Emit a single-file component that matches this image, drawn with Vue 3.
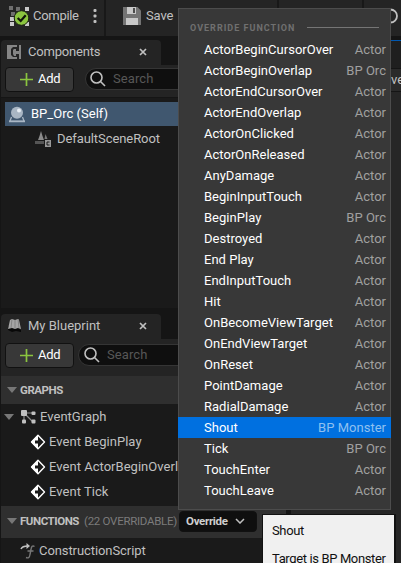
<script setup>
const functions = [
  ['ActorBeginCursorOver', 'Actor'],
  ['ActorBeginOverlap', 'BP Orc'],
  ['ActorEndCursorOver', 'Actor'],
  ['ActorEndOverlap', 'Actor'],
  ['ActorOnClicked', 'Actor'],
  ['ActorOnReleased', 'Actor'],
  ['AnyDamage', 'Actor'],
  ['BeginInputTouch', 'Actor'],
  ['BeginPlay', 'BP Orc'],
  ['Destroyed', 'Actor'],
  ['End Play', 'Actor'],
  ['EndInputTouch', 'Actor'],
  ['Hit', 'Actor'],
  ['OnBecomeViewTarget', 'Actor'],
  ['OnEndViewTarget', 'Actor'],
  ['OnReset', 'Actor'],
  ['PointDamage', 'Actor'],
  ['RadialDamage', 'Actor'],
  ['Shout', 'BP Monster'],
  ['Tick', 'BP Orc'],
  ['TouchEnter', 'Actor'],
  ['TouchLeave', 'Actor'],
]
const selected = 'Shout'
const events = ['Event BeginPlay', 'Event ActorBeginOverlap', 'Event Tick']
</script>

<template>
  <div class="editor">
    <header class="toolbar">
      <div class="group compile">
        <svg class="compile-icon" width="22" height="22" viewBox="0 0 22 22">
          <path fill="#6f6f6f" d="M1 1h4v4H1zM8 2h4v4H8zM3 7h4v4H3z" />
          <path fill="#c8c8c8" d="M17 2h4v4h-4zM2 12h4v4H2zM2 17h4v4H2zM8 8h4v4H8zM17 17h4v4h-4z" />
          <circle cx="13.500" cy="13" r="7.300" fill="#8bc53f" stroke="#1c2414" />
          <path d="M9.700 13l3 3 5-5.800" fill="none" stroke="#10150a" stroke-width="2.200" />
        </svg>
        <span>Compile</span>
        <svg class="dots" width="4" height="16" viewBox="0 0 4 16" fill="#c0c0c0">
          <rect x=".5" y="1" width="3" height="3" rx="1" />
          <rect x=".5" y="6.500" width="3" height="3" rx="1" />
          <rect x=".5" y="12" width="3" height="3" rx="1" />
        </svg>
      </div>
      <div class="group save">
        <svg width="18" height="18" viewBox="0 0 18 18">
          <path fill="#747474" d="M0 0h14.500L18 3.500V18H0z" />
          <path fill="#c8c8c8" d="M4 0h9v7H4zM3 11h12v7H3z" />
          <path fill="#4b4b4b" d="M10 1h2v5h-2z" />
        </svg>
        <span>Save</span>
      </div>
      <div class="group mid"></div>
      <div class="group find">
        <svg width="20" height="20" viewBox="0 0 20 20" fill="none" stroke="#c0c0c0" stroke-width="1.800">
          <circle cx="9.500" cy="8" r="6.500" />
          <path d="M5.500 12.500L1 17.500M8.500 5v6" />
        </svg>
      </div>
    </header>

    <div class="workspace">
      <aside class="sidebar">
        <section class="panel components">
          <div class="tab">
            <svg width="14" height="14" viewBox="0 0 14 14">
              <path fill="#858585" d="M0 0h10v2H6L4 4v6l2 2h4v2H0zM12 0h2v14h-2v-5H9v2H7L6 9V5l1-1h2v2h3z" />
            </svg>
            <span>Components</span>
            <svg class="close" width="8" height="8" viewBox="0 0 8 8"><path d="M1 1l6 6M7 1L1 7" stroke="#c0c0c0" stroke-width="1.700" /></svg>
          </div>
          <div class="controls">
            <button class="add">
              <svg width="13" height="13" viewBox="0 0 13 13"><path d="M6.500 0v13M0 6.500h13" stroke="#8bc53f" stroke-width="1.700" /></svg>Add
            </button>
            <div class="search">
              <svg width="16" height="16" viewBox="0 0 16 16" fill="none" stroke="#c0c0c0" stroke-width="1.600"><circle cx="6.500" cy="6.500" r="5.500" /><path d="M10.500 10.500l4.500 4.500" /></svg>
              <span>Search</span>
            </div>
          </div>
          <div class="tree">
            <div class="row self">
              <svg width="16" height="17" viewBox="0 0 16 17">
                <path d="M2.500 11L.8 15.500h14.400L13.500 11" fill="none" stroke="#a9b6c4" stroke-width="1.300" />
                <path d="M0 14.500h16V16H0z" fill="#a9b6c4" />
                <circle cx="8" cy="6.700" r="6" fill="#a9b6c4" />
                <circle cx="10" cy="4.500" r="2" fill="#e8eef5" />
              </svg>
              <span>BP_Orc (Self)</span>
            </div>
            <div class="row root">
              <svg width="17" height="16" viewBox="0 0 17 16">
                <path d="M6 0l1.500 5L9 9H3l1.500-4z" fill="#8a8a8a" />
                <path d="M10.500 3l2 5h-3z" fill="#777" />
                <path d="M0 10h9v3H0z" fill="#555" />
                <path d="M10 9h6v7h-6z" fill="#999" />
                <path d="M14.500 11H12v3h2.500" fill="none" stroke="#1a1a1a" stroke-width="1" />
              </svg>
              <span>DefaultSceneRoot</span>
            </div>
          </div>
        </section>

        <section class="panel blueprint">
          <div class="tab">
            <svg width="15" height="15" viewBox="0 0 15 15">
              <path d="M1 8l4 2 4-1 5 3v2l-5-1-4 1-4-2z" fill="#080808" />
              <path d="M3 2l2-1 3 1 3-1 1 1 2 9-3-1-3 1-3-1-4 1z" fill="#a5a5a5" />
              <path d="M5 1L4 10M8 2v9M11 1l1 9" stroke="#828282" />
            </svg>
            <span>My Blueprint</span>
            <svg class="close" width="8" height="8" viewBox="0 0 8 8"><path d="M1 1l6 6M7 1L1 7" stroke="#c0c0c0" stroke-width="1.700" /></svg>
          </div>
          <div class="controls">
            <button class="add">
              <svg width="13" height="13" viewBox="0 0 13 13"><path d="M6.500 0v13M0 6.500h13" stroke="#8bc53f" stroke-width="1.700" /></svg>Add
            </button>
            <div class="search">
              <svg width="16" height="16" viewBox="0 0 16 16" fill="none" stroke="#c0c0c0" stroke-width="1.600"><circle cx="6.500" cy="6.500" r="5.500" /><path d="M10.500 10.500l4.500 4.500" /></svg>
              <span>Search</span>
            </div>
          </div>
          <div class="section graphs"><i class="arrow"></i><b>GRAPHS</b></div>
          <div class="graph-tree">
            <div class="row graph">
              <i class="arrow"></i>
              <svg width="15" height="14" viewBox="0 0 15 14">
                <path d="M3 3h9M3 3v9M4 4l8 8" stroke="#8a8a8a" stroke-width="1.200" />
                <rect width="6" height="6" rx="1" fill="#c0c0c0" />
                <rect x="10.500" y="1.500" width="4" height="3.500" rx="1" fill="#c0c0c0" />
                <rect x="1" y="9.500" width="4" height="4" rx="1" fill="#c0c0c0" />
                <rect x="10.500" y="9.500" width="4" height="4" rx="1" fill="#c0c0c0" />
              </svg>
              <span>EventGraph</span>
            </div>
            <div v-for="event in events" :key="event" class="row event">
              <svg width="16" height="16" viewBox="0 0 16 16">
                <path d="M8 1.200L14.500 8 8 14.800 1.500 8z" fill="none" stroke="#fff" stroke-width="1.400" stroke-linejoin="round" />
                <path d="M8 1v14L1 8z" fill="#fff" />
                <path d="M5 6.500h3V4l4 4-4 4V9.500H5z" fill="#1a1a1a" />
              </svg>
              <span>{{ event }}</span>
            </div>
          </div>
          <div class="section functions">
            <i class="arrow"></i><b>FUNCTIONS</b><span class="count">(22 OVERRIDABLE)</span>
            <button class="override">Override
              <svg width="10" height="6" viewBox="0 0 10 6"><path d="M1 1l4 4 4-4" fill="none" stroke="#c0c0c0" stroke-width="1.500" /></svg>
            </button>
          </div>
          <div class="row script">
            <svg width="16" height="16" viewBox="0 0 16 16" fill="none">
              <path d="M1 6C2 3.500 4 3 8 3" stroke="#c0c0c0" stroke-width="1.500" />
              <path d="M6.500 0L10 3 6.500 6z" fill="#c0c0c0" />
              <path d="M14.500 3.500c-2-1.500-3 0-3.500 3l-1 5c-.5 3-1.500 4-4 3M7.500 8h6" stroke="#777" stroke-width="1.400" />
            </svg>
            <span>ConstructionScript</span>
          </div>
        </section>
      </aside>
      <main class="graph-view">
        <div class="graph-tabs"></div>
        <div class="breadcrumb"><span>ve</span></div>
      </main>
    </div>

    <div class="menu">
      <div class="menu-title"><span>OVERRIDE FUNCTION</span><i></i></div>
      <div v-for="[name, owner] in functions" :key="name" class="item" :class="{ active: name === selected }">
        <span>{{ name }}</span><em>{{ owner }}</em>
      </div>
    </div>
    <div class="tooltip"><p>Shout</p><p>Target is BP Monster</p></div>
  </div>
</template>

<style>
body { background: #151515; overflow: hidden; }
</style>
<style scoped>
* { box-sizing: border-box; }
.editor { position: relative; width: 401px; height: 563px; overflow: hidden; display: flex; flex-direction: column; background: #151515; color: #c0c0c0; font: 13px/16px Roboto, sans-serif; letter-spacing: .02px; white-space: nowrap; }
svg { display: block; flex: none; }
i, em { font-style: normal; }
button { font: inherit; letter-spacing: inherit; }
.toolbar { display: flex; gap: 2px; flex: none; height: 36px; background: #181818; }
.group { display: flex; align-items: center; background: #242424; height: 36px; padding-bottom: 5px; }
.compile { width: 108px; padding-left: 8px; }
.compile span { width: 46px; margin-left: 3px; letter-spacing: -.3px; }
.dots { margin-left: 14px; }
.save { width: 177px; padding-left: 17px; gap: 5px; }
.save span { letter-spacing: -.1px; }
.mid { width: 87px; }
.find { flex: 1; padding: 0 0 0 17px; }
.workspace { flex: 1; min-height: 0; display: flex; gap: 5px; padding-top: 4px; }
.sidebar { width: 285px; margin-left: 1px; flex: none; display: flex; flex-direction: column; gap: 6px; }
.panel { display: flex; flex-direction: column; }
.components { height: 268px; }
.blueprint { flex: 1; }
.tab { width: 160px; height: 25px; flex: none; display: flex; align-items: center; padding: 0 14px 2px 6px; background: #242424; border-radius: 4px 4px 0 0; }
.tab span { margin-left: 7px; letter-spacing: -.2px; }
.blueprint .tab span { margin-left: 6px; letter-spacing: 0; }
.close { margin-left: auto; }
.controls { display: flex; align-items: center; gap: 11px; flex: none; height: 32px; padding: 1px 0 5px 4px; background: #242424; }
.blueprint .controls { height: 37px; padding-bottom: 5px; padding-top: 0; gap: 4px; }
.add { width: 69px; height: 25px; flex: none; display: flex; align-items: center; gap: 5px; padding: 0 0 0 14px; background: #383838; border: 1px solid #111; border-radius: 4px; color: #fff; letter-spacing: -.3px; }
.search { flex: 1; height: 22px; display: flex; align-items: center; gap: 7px; padding-left: 5px; border: 1px solid #353535; border-radius: 11px; background: #0f0f0f; }
.components .search { padding-left: 4px; }
.search span { color: #575757; letter-spacing: .1px; }
.tree { flex: 1; padding: 4px 0 0 4px; background: #1a1a1a; border-top: 1px solid #151515; }
.row { display: flex; align-items: center; height: 25px; background: #1a1a1a; }
.self { height: 24px; background: #40576f; color: #fff; padding-left: 4px; gap: 6px; }
.root { padding-left: 30px; gap: 5px; letter-spacing: -.08px; }
.section { display: flex; align-items: center; flex: none; background: #2f2f2f; padding-left: 6px; }
.section b { margin-left: 3px; font-size: 11.500px; font-weight: 700; letter-spacing: -.45px; }
.graphs { height: 28px; }
.functions { height: 32px; padding-bottom: 2px; }
.functions b { width: 61px; }
.count { width: 94px; margin-left: 3px; font-size: 11.500px; letter-spacing: -.28px; color: #7b7b7b; }
.arrow { border: 5px solid transparent; border-top: 6px solid #777; border-bottom: 0; }
.graph-tree { height: 102px; flex: none; background: #1a1a1a; }
.graph { padding-left: 3px; }
.graph svg { margin: 0 4px 0 7px; }
.event { padding-left: 29px; gap: 3px; letter-spacing: .03px; }
.override { display: flex; align-items: center; justify-content: space-between; width: 78px; height: 21px; margin-left: 1px; padding: 0 11px 0 6px; border: 1px solid #111; border-radius: 4px; background: #0f0f0f; color: #d0d0d0; font-size: 11.500px; font-weight: 700; letter-spacing: -.3px; }
.script { padding-left: 19px; gap: 3px; letter-spacing: -.08px; }
.graph-view { flex: 1; min-width: 0; display: flex; flex-direction: column; background: #262626; }
.graph-tabs { height: 28px; flex: none; background: #1f1f1f; border-top: 1px solid #0057b0; }
.breadcrumb { display: flex; align-items: center; justify-content: flex-end; height: 24px; flex: none; padding-bottom: 1px; overflow: hidden; background: #2a2a2a; border: solid #151515; border-width: 1px 0; }
.breadcrumb span { width: 10px; }
.menu { position: absolute; left: 178px; top: 8px; width: 213px; height: 502px; border: 1px solid #4c4c4c; background: #383838; }
.menu-title { display: flex; align-items: center; gap: 12px; height: 30px; padding: 7px 11px 0; color: #707070; font-size: 9px; font-weight: 700; letter-spacing: 1.020px; }
.menu-title i { flex: 1; height: 1px; background: #757575; }
.item { display: flex; justify-content: space-between; align-items: center; height: 21px; margin: 0 -1px; padding: 0 5px 0 26px; color: #fff; }
.item em { color: #a0a0a0; }
.active { background: #0070e0; }
.active em { color: #8fc0f0; }
.tooltip { position: absolute; left: 263px; top: 515px; width: 131px; height: 60px; padding: 8px 9px; background: #f0f0f0; color: #101010; letter-spacing: -.37px; box-shadow: 0 0 0 1px #111, 1px 0 0 1px #111; }
.tooltip p { margin: 0 0 12px; }
</style>
